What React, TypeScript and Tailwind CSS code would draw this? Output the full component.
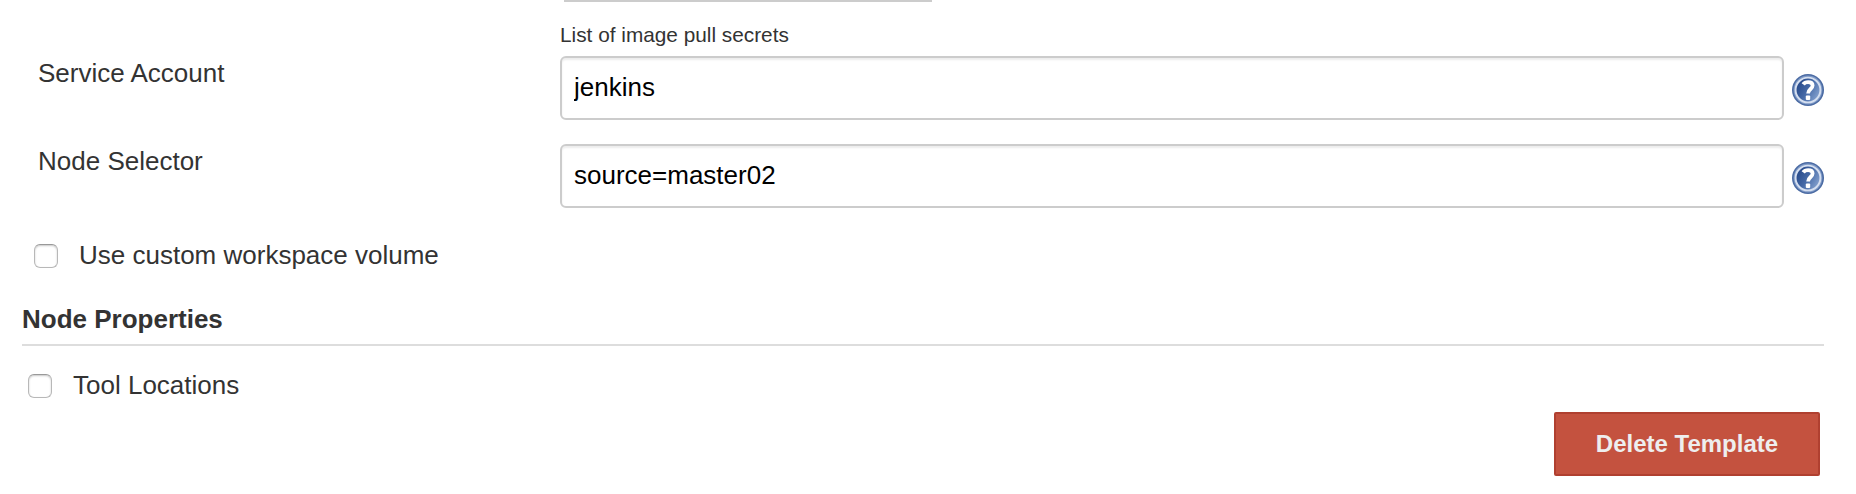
import { useId } from "react";

function HelpIcon() {
  const id = useId();
  return (
    <svg className="mt-[18px] ml-2 size-8 shrink-0" viewBox="0 0 32 32" role="img">
      <defs>
        <linearGradient id={id} x1="0.05" y1="0.3" x2="0.95" y2="0.8">
          <stop offset="0" stopColor="#27498a" />
          <stop offset="0.45" stopColor="#4569a6" />
          <stop offset="1" stopColor="#86a3d0" />
        </linearGradient>
      </defs>
      <circle cx="16" cy="16" r="16" fill="#4b6ba3" />
      <circle cx="16" cy="16" r="14.4" fill="#7e99c6" />
      <circle cx="16" cy="16" r="12.4" fill={`url(#${id})`} stroke="#d5dff0" strokeWidth="1.9" />
      <path
        d="M11.2 10.4C12.4 8.6 14.2 8.1 16.2 8.1C19 8.1 20.6 9.5 20.6 11.6C20.6 15 16.1 15.2 16.1 19.6"
        fill="none"
        stroke="#fff"
        strokeWidth="3.8"
      />
      <rect x="13.8" y="21.6" width="4.4" height="4.4" rx="1" fill="#fff" />
    </svg>
  );
}

function TextRow({ label, value }: { label: string; value: string }) {
  return (
    <div className="flex h-16 items-start">
      <div className="mt-0.5 w-[522px] shrink-0 text-[26px] leading-[30px]">{label}</div>
      <input
        type="text"
        defaultValue={value}
        className="h-16 w-[1224px] shrink-0 rounded-md border-2 border-[#ccc] bg-white px-3 pb-0.5 text-[26px] leading-[30px] text-black shadow-[inset_0_2px_2px_rgba(0,0,0,0.075)] outline-none"
      />
      <HelpIcon />
    </div>
  );
}

function CheckRow({ label }: { label: string }) {
  return (
    <label className="flex h-[30px] items-start gap-[21px]">
      <input
        type="checkbox"
        className="mt-1 size-6 appearance-none rounded-[6px] border border-[#b8b8b8] border-t-[#999] bg-white shadow-[inset_0_1px_2px_rgba(0,0,0,0.22)]"
      />
      <span className="text-[26px] leading-[30px]">{label}</span>
    </label>
  );
}

export default function App() {
  return (
    <main className="h-[494px] w-[1856px] overflow-hidden bg-white font-['Liberation_Sans',Arial,sans-serif] text-[#333]">
      <div className="ml-[564px] h-0.5 w-[368px] bg-[#ccc]" />
      <p className="mt-[21px] ml-[560px] h-[33px] text-[20.8px] leading-6">List of image pull secrets</p>
      <div className="flex flex-col gap-6 pl-[38px]">
        <TextRow label="Service Account" value="jenkins" />
        <TextRow label="Node Selector" value="source=master02" />
      </div>
      <div className="mt-8 pl-[34px]">
        <CheckRow label="Use custom workspace volume" />
      </div>
      <h2 className="mt-[34px] ml-[22px] h-[42px] w-[1802px] border-b-2 border-[#ddd] text-[26px] leading-[30px] font-bold">
        Node Properties
      </h2>
      <div className="mt-6 pl-7">
        <CheckRow label="Tool Locations" />
      </div>
      <div className="mt-3 flex justify-end pr-9">
        <button className="h-16 w-[266px] rounded-[2px] border-2 border-[#b04030] bg-[#c4523f] text-2xl font-bold text-[#eee]">
          Delete Template
        </button>
      </div>
    </main>
  );
}
